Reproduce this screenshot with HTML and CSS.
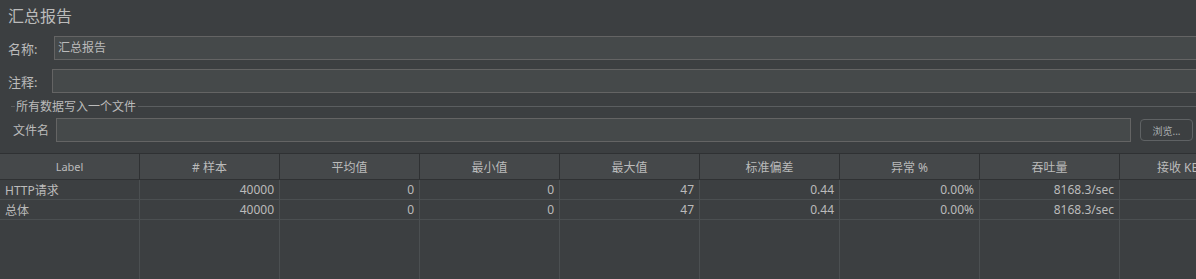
FILE: index.html
```html
<!DOCTYPE html>
<html lang="zh-CN">
<head>
    <meta charset="UTF-8">
    <title>汇总报告</title>
    <link rel="stylesheet" href="styles.css">
</head>
<body>
    <!-- Título do painel -->
    <div class="title">汇总报告</div>

    <div class="field-row row-name">
        <label class="lbl lbl-name">名称:</label>
        <div class="input">汇总报告</div>
    </div>

    <div class="field-row row-comment">
        <label class="lbl lbl-comment">注释:</label>
        <div class="input"></div>
    </div>

    <!-- Grupo de arquivo -->
    <div class="group-title">
        <span class="group-line short"></span>
        <span class="group-text">所有数据写入一个文件</span>
        <span class="group-line"></span>
    </div>

    <div class="file-row">
        <label class="lbl lbl-file">文件名</label>
        <div class="input file-input"></div>
        <button class="browse-btn">浏览...</button>
    </div>

    <!-- Tabela de resultados -->
    <table class="report">
        <thead>
            <tr>
                <th class="th-label">Label</th>
                <th># 样本</th>
                <th>平均值</th>
                <th>最小值</th>
                <th>最大值</th>
                <th>标准偏差</th>
                <th>异常 %</th>
                <th>吞吐量</th>
                <th>接收 KB/sec</th>
            </tr>
        </thead>
        <tbody>
            <tr>
                <td class="td-label">HTTP请求</td>
                <td>40000</td>
                <td>0</td>
                <td>0</td>
                <td>47</td>
                <td>0.44</td>
                <td>0.00%</td>
                <td>8168.3/sec</td>
                <td></td>
            </tr>
            <tr>
                <td class="td-label">总体</td>
                <td>40000</td>
                <td>0</td>
                <td>0</td>
                <td>47</td>
                <td>0.44</td>
                <td>0.00%</td>
                <td>8168.3/sec</td>
                <td></td>
            </tr>
            <tr class="filler">
                <td></td><td></td><td></td><td></td><td></td><td></td><td></td><td></td><td></td>
            </tr>
        </tbody>
    </table>
</body>
</html>
```

FILE: styles.css
```css
/* Estilo geral (tema escuro) */
body {
    margin: 0;
    padding: 0;
    background-color: #3c3f41;
    color: #bbbbbb;
    font-family: "Noto Sans", "Noto Sans CJK SC", sans-serif;
    overflow: hidden;
    width: 1196px;
    height: 279px;
}

.title {
    font-size: 16px;
    line-height: 22px;
    height: 22px;
    padding: 5px 0 0 8px;
}

/* Linhas de campos */
.field-row {
    display: flex;
    align-items: center;
    height: 24px;
    margin-right: -20px;
    padding-left: 8px;
}

.row-name {
    margin-top: 9px;
}

.row-comment {
    margin-top: 9px;
}

.lbl {
    font-size: 13px;
    flex: 0 0 auto;
}

.lbl-name {
    width: 46px;
}

.lbl-comment {
    width: 44px;
}

.input {
    flex: 1;
    height: 22px;
    line-height: 22px;
    background-color: #45494a;
    border: 1px solid #646464;
    padding-left: 3px;
    font-size: 12px;
    color: #bbbbbb;
}

/* Título do grupo */
.group-title {
    display: flex;
    align-items: center;
    height: 16px;
    margin-top: 5px;
    padding-left: 11px;
    font-size: 12px;
}

.group-line {
    flex: 1;
    height: 1px;
    background-color: #5b5e60;
}

.group-line.short {
    flex: 0 0 4px;
}

.group-text {
    padding: 0 2px 0 1px;
}

.file-row {
    display: flex;
    align-items: center;
    height: 24px;
    margin-top: 4px;
    padding-left: 13px;
    padding-right: 3px;
}

.lbl-file {
    font-size: 12px;
    width: 43px;
}

.file-input {
    flex: 1;
}

.browse-btn {
    flex: 0 0 auto;
    width: 53px;
    height: 22px;
    margin-left: 9px;
    background-color: #3c3f41;
    border: 1px solid #5f6264;
    border-radius: 4px;
    color: #a9adb0;
    font-family: "Noto Sans", "Noto Sans CJK SC", sans-serif;
    font-size: 10px;
    padding: 0;
}

/* Tabela */
.report {
    margin-top: 11px;
    border-collapse: collapse;
    table-layout: fixed;
    width: 1260px;
    font-size: 12px;
    border-top: 1px solid #2f3133;
}

.report th {
    width: 139px;
    height: 25px;
    padding: 0;
    background-color: #45484a;
    font-weight: normal;
    text-align: center;
    border-right: 1px solid #2f3133;
    border-bottom: 1px solid #2f3133;
    white-space: nowrap;
    overflow: hidden;
}

.report th.th-label {
    font-size: 11px;
}

.report td {
    height: 19px;
    padding: 0 5px 0 4px;
    text-align: right;
    border-right: 1px solid #4b4f51;
    border-bottom: 1px solid #4b4f51;
    white-space: nowrap;
    overflow: hidden;
}

.report td.td-label {
    text-align: left;
    padding-left: 5px;
}

.report tr.filler td {
    height: 70px;
    border-bottom: none;
}
```
